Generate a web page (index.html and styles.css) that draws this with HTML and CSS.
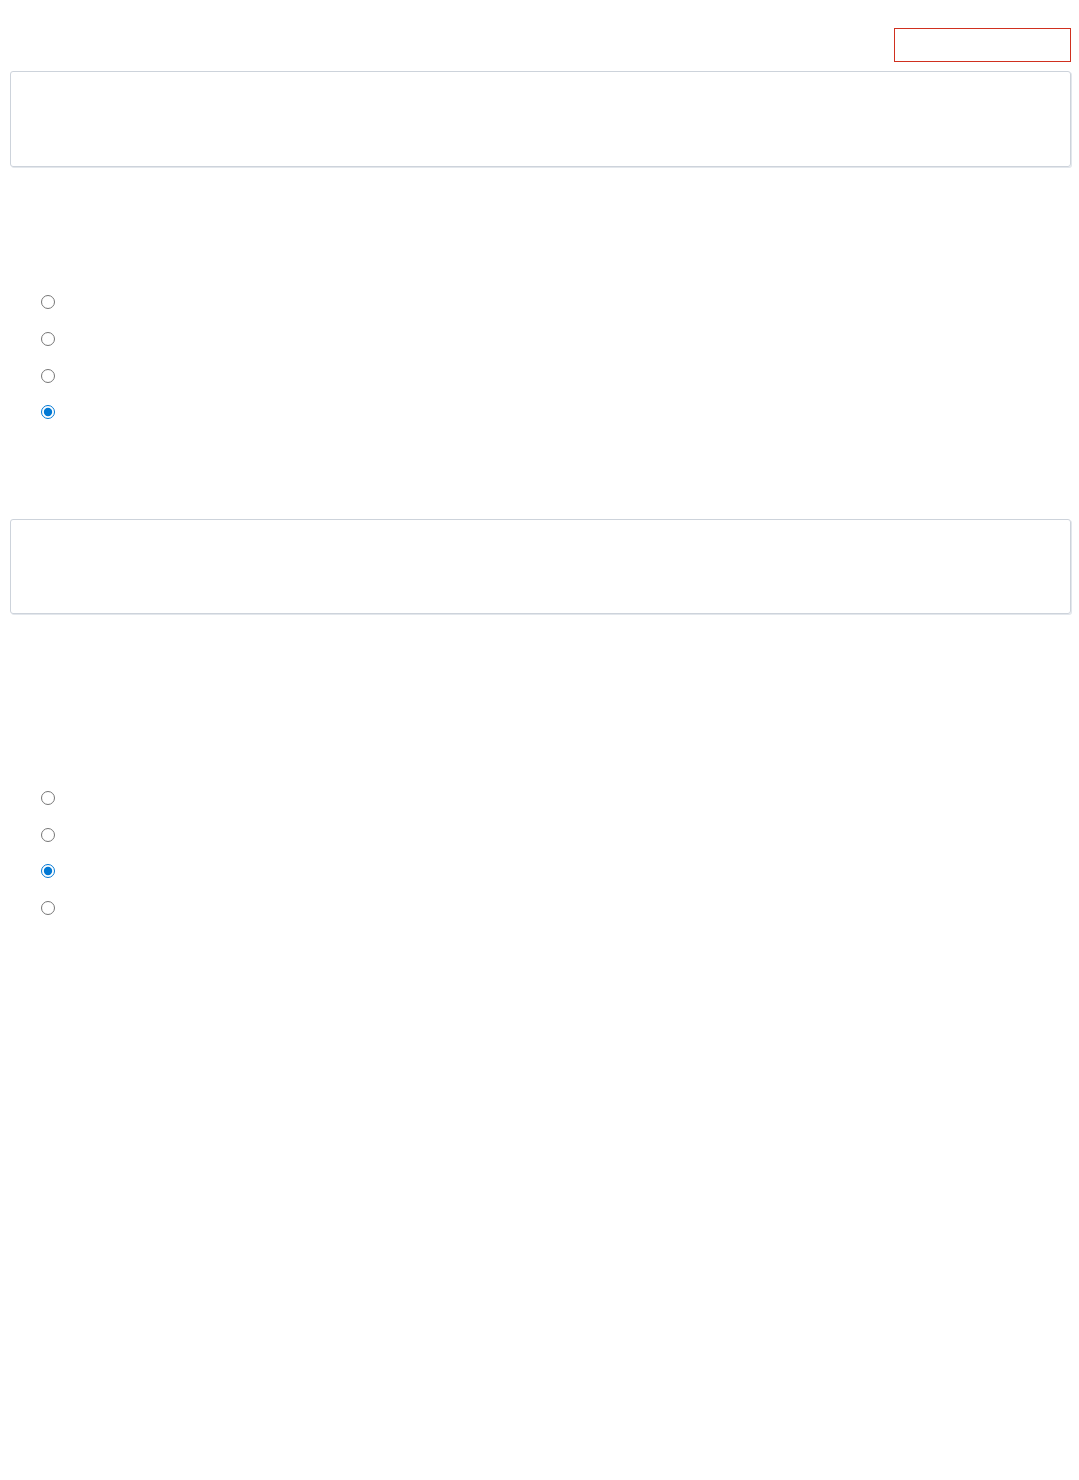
FILE: index.html
```html
<!DOCTYPE html>
<html lang="en">
<head>
  <meta charset="UTF-8">
  <title>Form</title>
  <meta name="viewport" content="width=device-width, initial-scale=1.0">
  <link rel="stylesheet" href="styles.css">
</head>
<body>

<div class="page">
  <div class="top-bar">
    <div class="btn-outline"></div>
  </div>

  <div class="panel panel-first"></div>

  <div class="options options-first">
    <label class="option"><input type="radio" name="q1"></label>
    <label class="option"><input type="radio" name="q1"></label>
    <label class="option"><input type="radio" name="q1"></label>
    <label class="option"><input type="radio" name="q1" checked></label>
  </div>

  <div class="panel panel-second"></div>

  <div class="options options-second">
    <label class="option"><input type="radio" name="q2"></label>
    <label class="option"><input type="radio" name="q2"></label>
    <label class="option"><input type="radio" name="q2" checked></label>
    <label class="option"><input type="radio" name="q2"></label>
  </div>
</div>

</body>
</html>
```

FILE: styles.css
```css
body { margin: 0; background: #fff; font-family: "Liberation Sans", Arial, sans-serif; }
.page { padding: 28px 8px 0 10px; }

.top-bar { display: flex; justify-content: flex-end; }
.btn-outline { width: 177px; height: 34px; box-sizing: border-box; border: 1px solid #d0301f; }

.panel { box-sizing: border-box; border: 1px solid #cdd3db; border-radius: 3px; box-shadow: 1px 1px 0 #e3e7ec; }
.panel-first { margin-top: 9px; height: 96px; }
.panel-second { margin-top: 88px; height: 95px; }

.options { padding-left: 31px; }
.options-first { margin-top: 117px; }
.options-second { margin-top: 166px; }
.option { display: flex; align-items: center; height: 36.67px; }
.option input { margin: 0; width: 14px; height: 14px; accent-color: #0078d4; }
```
